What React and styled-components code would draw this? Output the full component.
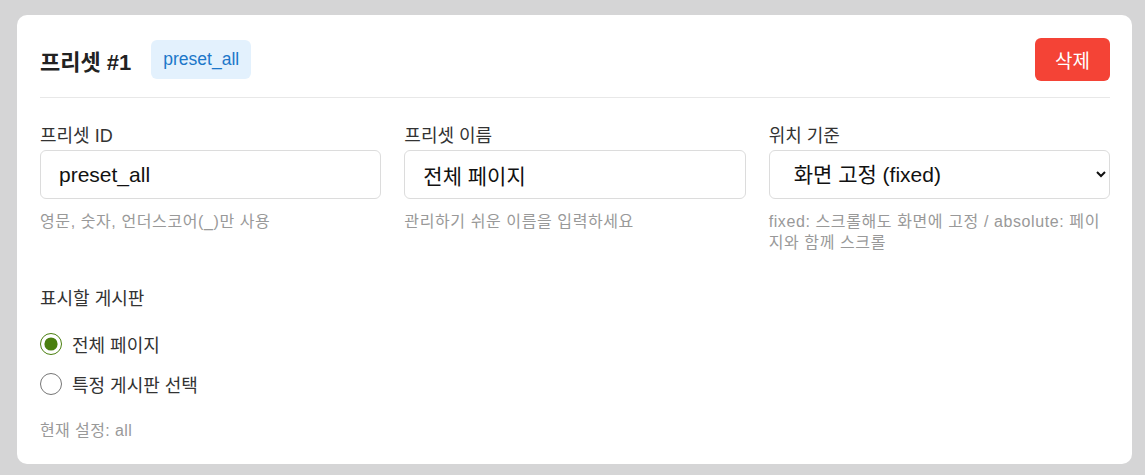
import React from "react";
import styled, { createGlobalStyle } from "styled-components";

const Global = createGlobalStyle`
  html, body { margin: 0; padding: 0; }
  body {
    background: #d5d5d6;
    font-family: "Liberation Sans", "Noto Sans CJK KR", Arial, sans-serif;
  }
`;

const Page = styled.div`
  padding: 15px 13px 12px 17px;
  min-height: 475px;
  box-sizing: border-box;
`;

const Card = styled.div`
  background: #fff;
  border-radius: 10px;
  padding: 23px 22px 23px 23px;
`;

const Header = styled.div`
  display: flex;
  align-items: center;
  padding-bottom: 16px;
  border-bottom: 1px solid #e8e8e8;
`;

const Title = styled.h2`
  margin: 0;
  font-size: 22px;
  font-weight: 700;
  color: #222;
`;

const Badge = styled.span`
  margin-left: 20px;
  height: 39px;
  display: inline-flex;
  align-items: center;
  padding: 0 12px;
  border-radius: 6px;
  background: #e3f1fd;
  color: #1c77c9;
  font-size: 17.5px;
`;

const DeleteButton = styled.button`
  margin-left: auto;
  width: 75px;
  height: 43px;
  border: none;
  border-radius: 6px;
  background: #f44336;
  color: #fff;
  font-family: inherit;
  font-size: 19px;
  cursor: pointer;
`;

const Grid = styled.div`
  display: grid;
  grid-template-columns: repeat(3, 1fr);
  gap: 23px;
  margin-top: 27px;
`;

const Field = styled.div`
  display: flex;
  flex-direction: column;
`;

const Label = styled.label`
  font-size: 18px;
  line-height: 22px;
  color: #333;
  margin-bottom: 3px;
`;

const TextInput = styled.input`
  box-sizing: border-box;
  height: 49px;
  width: 100%;
  border: 1px solid #dcdcdc;
  border-radius: 6px;
  padding: 0 18px;
  font-family: "Liberation Sans", "Noto Sans CJK KR", sans-serif;
  font-size: 21px;
  color: #111;
  outline: none;
`;

const Select = styled.select`
  box-sizing: border-box;
  height: 49px;
  width: 100%;
  border: 1px solid #dcdcdc;
  border-radius: 6px;
  padding: 0 10px 0 20px;
  font-family: "Liberation Sans", "Noto Sans CJK KR", sans-serif;
  font-size: 21px;
  color: #111;
  background: #fff;
  outline: none;
`;

const Help = styled.p`
  margin: 12px 0 0;
  font-size: 16px;
  line-height: 21px;
  letter-spacing: 0.6px;
  color: #999;
`;

const Section = styled.div`
  margin-top: 35px;
  display: flex;
  flex-direction: column;
`;

const RadioList = styled.div`
  display: flex;
  flex-direction: column;
  margin-top: 11px;
`;

const RadioRow = styled.label`
  display: flex;
  align-items: center;
  height: 40px;
  font-size: 18px;
  color: #333;
  cursor: pointer;
`;

const Radio = styled.input`
  width: 22px;
  height: 22px;
  margin: 0 10px 0 0;
  accent-color: #4a7f0f;
`;

const Current = styled.p`
  margin: 16px 0 0;
  font-size: 16px;
  line-height: 21px;
  letter-spacing: 0.4px;
  color: #999;
`;

export default function App() {
  return (
    <>
      <Global />
      <Page>
        <Card>
          <Header>
            <Title>프리셋 #1</Title>
            <Badge>preset_all</Badge>
            <DeleteButton>삭제</DeleteButton>
          </Header>
          <Grid>
            <Field>
              <Label>프리셋 ID</Label>
              <TextInput defaultValue="preset_all" />
              <Help>영문, 숫자, 언더스코어(_)만 사용</Help>
            </Field>
            <Field>
              <Label>프리셋 이름</Label>
              <TextInput defaultValue="전체 페이지" />
              <Help>관리하기 쉬운 이름을 입력하세요</Help>
            </Field>
            <Field>
              <Label>위치 기준</Label>
              <Select defaultValue="fixed">
                <option value="fixed">화면 고정 (fixed)</option>
                <option value="absolute">페이지 기준 (absolute)</option>
              </Select>
              <Help>fixed: 스크롤해도 화면에 고정 / absolute: 페이지와 함께 스크롤</Help>
            </Field>
          </Grid>
          <Section>
            <Label as="div">표시할 게시판</Label>
            <RadioList>
              <RadioRow>
                <Radio type="radio" name="board" defaultChecked />
                전체 페이지
              </RadioRow>
              <RadioRow>
                <Radio type="radio" name="board" />
                특정 게시판 선택
              </RadioRow>
            </RadioList>
            <Current>현재 설정: all</Current>
          </Section>
        </Card>
      </Page>
    </>
  );
}
